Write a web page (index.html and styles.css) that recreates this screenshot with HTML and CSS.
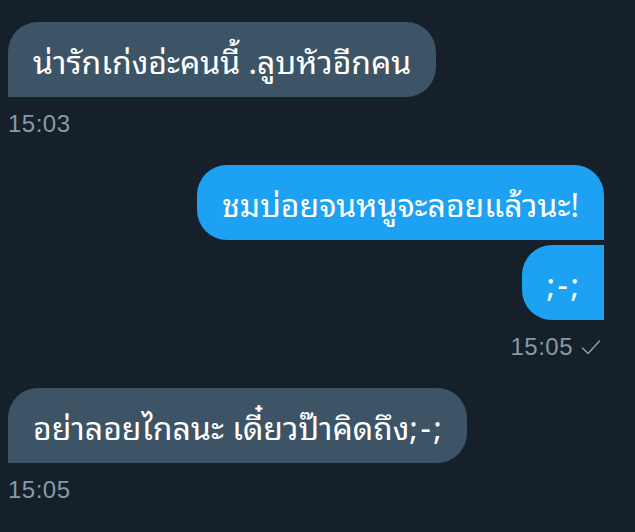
FILE: index.html
```html
<!DOCTYPE html>
<html lang="th">
<head>
<meta charset="utf-8">
<link rel="stylesheet" href="styles.css">
</head>
<body>
<div class="chat">
  <div class="group in">
    <div class="bubble gray first">น่ารักเก่งอ่ะคนนี้ .ลูบหัวอีกคน</div>
    <div class="time">15:03</div>
  </div>
  <div class="group out">
    <div class="bubble blue top">ชมบ่อยจนหนูจะลอยแล้วนะ!</div>
    <div class="bubble blue mid"><span class="emote">;-;</span></div>
    <div class="time">15:05 <svg class="check" width="20" height="15" viewBox="0 0 20 15"><polyline points="1.5,8 7,13.5 18.5,1" fill="none" stroke="#8899a6" stroke-width="1.6" stroke-linecap="round" stroke-linejoin="round"/></svg></div>
  </div>
  <div class="group in">
    <div class="bubble gray first">อย่าลอยไกลนะ เดี๋ยวป๊าคิดถึง<span class="emote">;-;</span></div>
    <div class="time">15:05</div>
  </div>
</div>
</body>
</html>
```
FILE: styles.css
```css
html, body {
  margin: 0;
  padding: 0;
  background: #15202b;
}
body {
  width: 635px;
  height: 532px;
  overflow: hidden;
  font-family: "Noto Sans Thai Looped", "Noto Sans", "Liberation Sans", sans-serif;
}
.chat {
  display: flex;
  flex-direction: column;
  padding: 22px 31px 0 8px;
  gap: 28px;
}
.group {
  display: flex;
  flex-direction: column;
  gap: 5px;
}
.group.in { align-items: flex-start; }
.group.out { align-items: flex-end; }
.bubble {
  color: #ffffff;
  font-size: 32px;
  line-height: 35px;
  padding: 20px 25px;
  border-radius: 30px;
  white-space: nowrap;
}
.emote { letter-spacing: 2.5px; margin-right: -2.5px; }
.gray { background: #3d5466; }
.blue { background: #1da1f2; }
.gray.first { border-bottom-left-radius: 0; }
.blue.top { border-bottom-right-radius: 0; }
.blue.mid { border-top-right-radius: 0; border-bottom-right-radius: 0; }
.time {
  display: flex;
  align-items: center;
  gap: 8px;
  font-family: "Liberation Sans", sans-serif;
  color: #8899a6;
  font-size: 24px;
  letter-spacing: 0.5px;
  line-height: 26px;
  margin-top: 9px;
}
.group.out .time { margin-right: 3px; }
.check { display: block; margin-top: 1px; }
```
